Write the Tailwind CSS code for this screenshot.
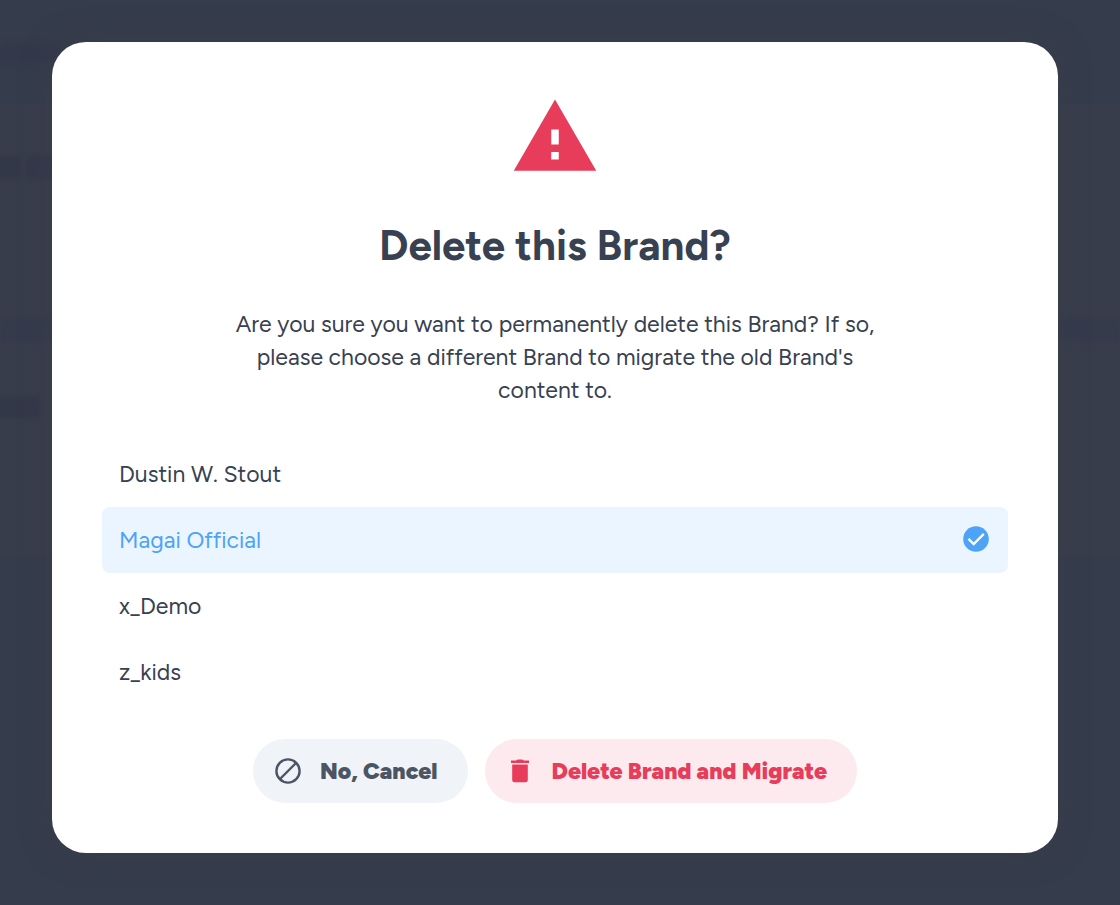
<!DOCTYPE html>
<html lang="en">
<head>
    <meta charset="utf-8">
    <meta name="viewport" content="width=device-width, initial-scale=1">
    <title>Delete this Brand?</title>
    <script src="https://cdn.jsdelivr.net/npm/@tailwindcss/browser@4"></script>
</head>
<body class="relative min-h-screen overflow-x-hidden bg-[#353c4b] font-['Figtree','Lato',sans-serif] text-[#374151]">
    <!-- dimmed page behind the dialog -->
    <div aria-hidden="true" class="absolute inset-0 overflow-hidden">
        <div class="absolute inset-x-0 top-[104px] h-[452px] bg-[#383d4b]"></div>
        <div class="absolute left-0 top-[44px] h-[18px] w-[60px] bg-[#33394a] blur-[3px]"></div>
        <div class="absolute -left-2 top-[156px] h-[23px] w-[29px] rounded-md bg-[#333849] blur-[2px]"></div>
        <div class="absolute left-[26px] top-[156px] h-[22px] w-[30px] rounded-md bg-[#333849] blur-[2px]"></div>
        <div class="absolute inset-x-0 top-[318px] h-[24px] bg-[#353b4b] blur-[2px]"></div>
        <div class="absolute -left-2 top-[397px] h-[21px] w-[49px] rounded-md bg-[#333849] blur-[2px]"></div>
    </div>

    <div
        role="dialog" aria-modal="true" aria-labelledby="delete-title"
        class="relative mt-[42px] mr-[62px] mb-[52px] ml-[52px] rounded-[34px] bg-white p-[50px] shadow-[0_0_30px_rgba(60,62,75,0.6)]"
    >
        <svg class="mx-auto size-[90px] fill-[#e83c5b]" viewBox="0 0 24 24" aria-hidden="true">
            <path d="M1 21h22L12 2 1 21zm12-3h-2v-2h2v2zm0-4h-2v-4h2v4z"/>
        </svg>

        <h1 id="delete-title" class="mt-10 text-center text-[42px] leading-[48px] font-bold">Delete this Brand?</h1>

        <p class="mx-auto mt-[38px] max-w-[672px] text-center text-[23px] leading-[33px]">
            Are you sure you want to permanently delete this Brand? If so, please choose a different Brand to migrate the old Brand's content to.
        </p>

        <form class="mt-[34px]">
            <fieldset aria-labelledby="delete-title">
                <label class="flex h-[66px] cursor-pointer items-center justify-between rounded-lg px-[17px] text-[23px] has-checked:bg-[#ebf5ff] has-checked:text-[#4da3f7]">
                    <input type="radio" name="brand" class="sr-only">
                    Dustin W. Stout
                </label>
                <label class="flex h-[66px] cursor-pointer items-center justify-between rounded-lg px-[17px] text-[23px] has-checked:bg-[#ebf5ff] has-checked:text-[#4da3f7]">
                    <input type="radio" name="brand" class="sr-only" checked>
                    Magai Official
                    <svg class="size-[30px]" viewBox="0 0 30 30" aria-hidden="true">
                        <circle cx="15" cy="14" r="12.8" fill="#4da3f7"/>
                        <path d="M7.5 13.8l5.2 5.2L22.8 8.8" fill="none" stroke="#fff" stroke-width="2.4"/>
                    </svg>
                </label>
                <label class="flex h-[66px] cursor-pointer items-center justify-between rounded-lg px-[17px] text-[23px] has-checked:bg-[#ebf5ff] has-checked:text-[#4da3f7]">
                    <input type="radio" name="brand" class="sr-only">
                    x_Demo
                </label>
                <label class="flex h-[66px] cursor-pointer items-center justify-between rounded-lg px-[17px] text-[23px] has-checked:bg-[#ebf5ff] has-checked:text-[#4da3f7]">
                    <input type="radio" name="brand" class="sr-only">
                    z_kids
                </label>
            </fieldset>

            <div class="mt-[34px] flex flex-wrap justify-center gap-[17px]">
                <button type="button" class="flex h-16 cursor-pointer items-center gap-[17px] rounded-full bg-[#f0f4f9] pr-[30px] pl-5 text-[23px] font-black text-[#4b5563]">
                    <svg class="size-[30px]" viewBox="0 0 30 30" fill="none" stroke="currentColor" stroke-width="2.4" aria-hidden="true">
                        <circle cx="15" cy="15" r="11.6"/>
                        <path d="M7 23L23 7"/>
                    </svg>
                    No, Cancel
                </button>
                <button type="button" class="flex h-16 cursor-pointer items-center gap-[17px] rounded-full bg-[#fdeaee] pr-[30px] pl-5 text-[23px] font-black text-[#e83c5b]">
                    <svg class="size-[30px]" viewBox="0 0 30 30" fill="currentColor" aria-hidden="true">
                        <path d="M6 4.6h5.2c.6-.8 1.3-1.2 2.2-1.2h3.2c.9 0 1.6.4 2.2 1.2H24V7H6zM7.2 8.4h15.6V24a2.2 2.2 0 0 1-2.2 2.2H9.4A2.2 2.2 0 0 1 7.2 24z"/>
                    </svg>
                    Delete Brand and Migrate
                </button>
            </div>
        </form>
    </div>
</body>
</html>
